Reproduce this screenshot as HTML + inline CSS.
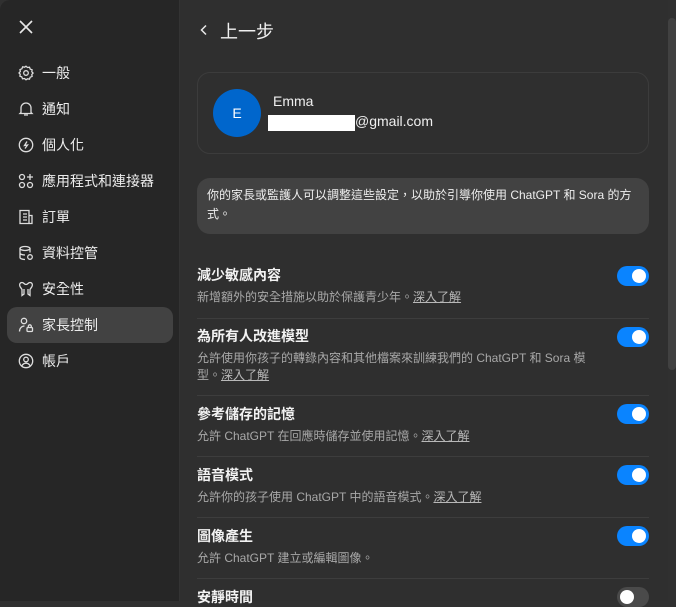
<!DOCTYPE html>
<html><head><meta charset="utf-8"><style>
*{margin:0;padding:0;box-sizing:border-box}
body{width:676px;height:601px;overflow:hidden;background:#303030;font-family:"Liberation Sans","Noto Sans CJK TC",sans-serif;color:#ececec;position:relative}
.side{position:absolute;left:0;top:0;width:180px;height:601px;background:#262626;border-right:1px solid #333;border-top-left-radius:10px}
.item{position:absolute;left:7px;width:166px;height:36px;border-radius:10px;font-size:14px;line-height:36px;padding-left:35px}
.item.sel{background:#424242}
.item svg{position:absolute;left:11px;top:10px}
.main{position:absolute;left:180px;top:0;width:488px;height:601px;background:#2f2f2f}
.abs{position:absolute}
.row{position:absolute;left:197px;width:452px}
.t{font-size:14px;font-weight:bold;color:#f2f2f2;position:absolute;left:0}
.d{font-size:12px;color:#a8a8a8;position:absolute;left:0;line-height:17px;width:410px}
.d u{color:#b8b8b8}
.sep{position:absolute;left:0;width:452px;height:1px;background:#3d3d3d}
.tog{position:absolute;left:420px;width:32px;height:20px;border-radius:10px;background:#0a84ff}
.tog::after{content:"";position:absolute;right:3px;top:3px;width:14px;height:14px;border-radius:50%;background:#fff}
.tog.off{background:#4a4a4a}.tog.off::after{left:3px;right:auto}
</style></head><body>
<div class="side">
<svg class="abs" style="left:19px;top:20px" width="14" height="14" viewBox="0 0 14 14" stroke="#e8e8e8" stroke-width="1.6" fill="none"><path d="M1 1L13 13M13 1L1 13"/></svg>
<div class="item" style="top:55px"><svg width="16" height="16" viewBox="0 0 16 16" fill="none" stroke="#ddd" stroke-width="1.3"><path d="M8 1.2l1.5 1.3 2-.3.7 1.9 1.9.7-.3 2 1.3 1.2-1.3 1.5.3 2-1.9.7-.7 1.9-2-.3L8 14.8l-1.5-1.3-2 .3-.7-1.9-1.9-.7.3-2L1 8l1.3-1.5-.3-2 1.9-.7.7-1.9 2 .3z"/><circle cx="8" cy="8" r="2.3"/></svg>一般</div>
<div class="item" style="top:91px"><svg width="16" height="16" viewBox="0 0 16 16" fill="none" stroke="#ddd" stroke-width="1.3"><path d="M3 11.5V7a5 5 0 0110 0v4.5l1 1H2z M6 14h4"/></svg>通知</div>
<div class="item" style="top:127px"><svg width="16" height="16" viewBox="0 0 16 16" fill="none" stroke="#ddd" stroke-width="1.3"><circle cx="8" cy="8" r="6.7"/><path d="M9 4.5L6.5 8.5 9.5 8 7 11.5"/></svg>個人化</div>
<div class="item" style="top:163px"><svg width="16" height="16" viewBox="0 0 16 16" fill="none" stroke="#ddd" stroke-width="1.3"><circle cx="4" cy="4" r="2.5"/><circle cx="12" cy="12" r="2.5"/><circle cx="4" cy="12" r="2.5"/><path d="M12 1v6M9 4h6"/></svg>應用程式和連接器</div>
<div class="item" style="top:199px"><svg width="16" height="16" viewBox="0 0 16 16" fill="none" stroke="#ddd" stroke-width="1.3"><path d="M2 1.5h9v5h3v8H2zM5 5h4M5 8h4M5 11h4M11 6.5v8"/></svg>訂單</div>
<div class="item" style="top:235px"><svg width="16" height="16" viewBox="0 0 16 16" fill="none" stroke="#ddd" stroke-width="1.3"><ellipse cx="7" cy="3.5" rx="5" ry="2"/><path d="M2 3.5v9c0 1 2 2 5 2M12 3.5v4M2 8c0 1 2 2 5 2"/><circle cx="12" cy="12" r="2.3"/></svg>資料控管</div>
<div class="item" style="top:271px"><svg width="16" height="16" viewBox="0 0 16 16" fill="none" stroke="#ddd" stroke-width="1.3"><path d="M4 1.5c-2 0-3 2-2 4l2 3v6l2-1.5V8M12 1.5c2 0 3 2 2 4l-2 3v6l-2-1.5V8M4 1.5c2 0 2 2 4 2s2-2 4-2"/></svg>安全性</div>
<div class="item sel" style="top:307px"><svg width="16" height="16" viewBox="0 0 16 16" fill="none" stroke="#ddd" stroke-width="1.3"><circle cx="6" cy="4" r="2.7"/><path d="M1.5 14.5c0-3 2-5.5 5-5.5"/><rect x="9" y="10.5" width="5.5" height="4" rx="1"/><path d="M10.3 10.5V9.3a1.5 1.5 0 013 0v1.2"/></svg>家長控制</div>
<div class="item" style="top:343px"><svg width="16" height="16" viewBox="0 0 16 16" fill="none" stroke="#ddd" stroke-width="1.3"><circle cx="8" cy="8" r="6.7"/><circle cx="8" cy="6.5" r="2.3"/><path d="M3.8 13c1-2 2.5-2.8 4.2-2.8s3.2.8 4.2 2.8"/></svg>帳戶</div>
</div>
<div class="main"></div>
<div class="abs" style="left:668px;top:18px;width:8px;height:352px;border-radius:4px;background:#414141"></div>
<svg class="abs" style="left:199px;top:24px" width="10" height="12" viewBox="0 0 10 12" fill="none" stroke="#e8e8e8" stroke-width="1.5"><path d="M7 1.5L2.5 6 7 10.5"/></svg>
<div class="abs" style="left:220px;top:18px;font-size:18px;color:#f0f0f0">上一步</div>
<div class="abs" style="left:197px;top:72px;width:452px;height:82px;border:1px solid #3c3c3c;border-radius:13px"></div>
<div class="abs" style="left:213px;top:89px;width:48px;height:48px;border-radius:50%;background:#0066cc;color:#fff;font-size:14px;text-align:center;line-height:48px">E</div>
<div class="abs" style="left:273px;top:93px;font-size:14px;color:#f0f0f0">Emma</div>
<div class="abs" style="left:268px;top:115px;width:87px;height:16px;background:#fff"></div>
<div class="abs" style="left:355px;top:113px;font-size:14px;color:#f0f0f0">@gmail.com</div>
<div class="abs" style="left:197px;top:178px;width:452px;height:56px;background:#424242;border-radius:13px;padding:8px 10px;font-size:12px;line-height:19px;color:#eee">你的家長或監護人可以調整這些設定，以助於引導你使用 ChatGPT 和 Sora 的方式。</div>

<div class="row" style="top:0">
<div class="t" style="top:265px">減少敏感內容</div><div class="d" style="top:289px">新增額外的安全措施以助於保護青少年。<u>深入了解</u></div><div class="tog" style="top:266px"></div><div class="sep" style="top:318px"></div>
<div class="t" style="top:326px">為所有人改進模型</div><div class="d" style="top:350px">允許使用你孩子的轉錄內容和其他檔案來訓練我們的 ChatGPT 和 Sora 模型。<u>深入了解</u></div><div class="tog" style="top:327px"></div><div class="sep" style="top:395px"></div>
<div class="t" style="top:404px">參考儲存的記憶</div><div class="d" style="top:428px">允許 ChatGPT 在回應時儲存並使用記憶。<u>深入了解</u></div><div class="tog" style="top:404px"></div><div class="sep" style="top:456px"></div>
<div class="t" style="top:465px">語音模式</div><div class="d" style="top:489px">允許你的孩子使用 ChatGPT 中的語音模式。<u>深入了解</u></div><div class="tog" style="top:465px"></div><div class="sep" style="top:517px"></div>
<div class="t" style="top:526px">圖像產生</div><div class="d" style="top:550px">允許 ChatGPT 建立或編輯圖像。</div><div class="tog" style="top:526px"></div><div class="sep" style="top:578px"></div>
<div class="t" style="top:587px">安靜時間</div><div class="tog off" style="top:587px"></div>
</div>
</body></html>
